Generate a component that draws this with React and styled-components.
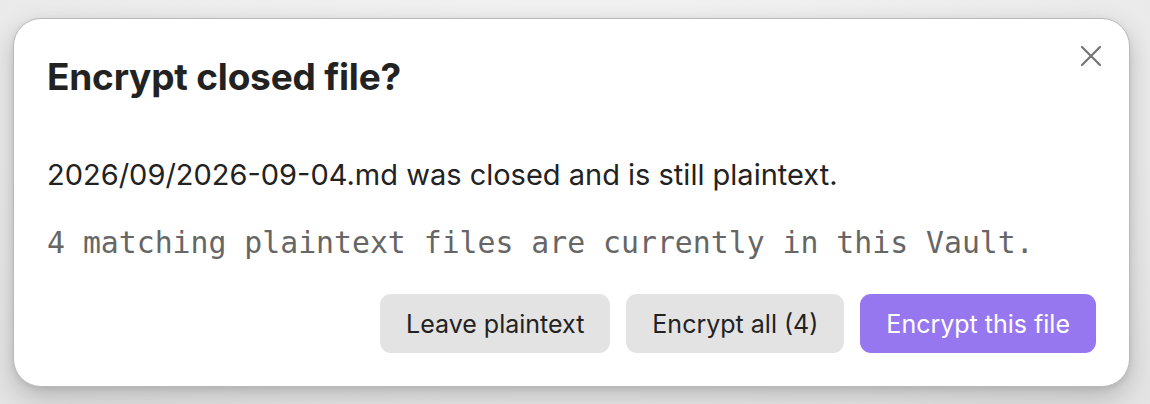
import React from "react";
import styled, { createGlobalStyle } from "styled-components";

const Global = createGlobalStyle`
  html, body { margin: 0; padding: 0; }
  body {
    background: radial-gradient(ellipse at 50% 30%, #f6f6f6 0%, #ececec 70%, #e4e4e4 100%);
    width: 1150px;
    height: 404px;
    overflow: hidden;
    font-family: Inter, "Noto Sans", sans-serif;
  }
`;

const Stage = styled.div`
  padding: 18px 0 0 13px;
`;

const Modal = styled.div`
  position: relative;
  box-sizing: border-box;
  width: 1117px;
  height: 369px;
  background: #fff;
  border: 1px solid #b9b9b9;
  border-radius: 28px;
  box-shadow: 0 10px 28px rgba(0, 0, 0, 0.22), 0 2px 6px rgba(0, 0, 0, 0.08);
  padding: 36px 33px 0 33px;
  display: flex;
  flex-direction: column;
`;

const Close = styled.button`
  position: absolute;
  top: 24px;
  right: 25px;
  width: 26px;
  height: 26px;
  padding: 0;
  border: 0;
  background: transparent;
  display: flex;
  align-items: center;
  justify-content: center;
`;

const Title = styled.h1`
  margin: 0;
  font-size: 37px;
  font-weight: 700;
  color: #222;
  line-height: 44px;
  letter-spacing: -0.2px;
`;

const Text = styled.p`
  margin: 58px 0 0;
  font-size: 29px;
  color: #222;
  line-height: 36px;
`;

const Mono = styled.p`
  margin: 32px 0 0;
  font-family: "DejaVu Sans Mono", "Liberation Mono", monospace;
  font-size: 29.8px;
  color: #666;
  line-height: 36px;
`;

const Actions = styled.div`
  margin-top: 33px;
  display: flex;
  justify-content: flex-end;
  gap: 16px;
`;

const Button = styled.button`
  height: 59px;
  padding: 0 26px;
  border: 0;
  border-radius: 11px;
  font-family: Inter, "Noto Sans", sans-serif;
  font-size: 25px;
  color: ${(p) => (p.$primary ? "#fff" : "#222")};
  background: ${(p) => (p.$primary ? "#9677f0" : "#e3e3e3")};
`;

export default function App() {
  return (
    <>
      <Global />
      <Stage>
        <Modal>
          <Close aria-label="Close">
            <svg width="22" height="22" viewBox="0 0 22 22">
              <path d="M2 2 L20 20 M20 2 L2 20" stroke="#737373" strokeWidth="2.2" strokeLinecap="round" />
            </svg>
          </Close>
          <Title>Encrypt closed file?</Title>
          <Text>2026/09/2026-09-04.md was closed and is still plaintext.</Text>
          <Mono>4 matching plaintext files are currently in this Vault.</Mono>
          <Actions>
            <Button>Leave plaintext</Button>
            <Button>Encrypt all (4)</Button>
            <Button $primary>Encrypt this file</Button>
          </Actions>
        </Modal>
      </Stage>
    </>
  );
}
